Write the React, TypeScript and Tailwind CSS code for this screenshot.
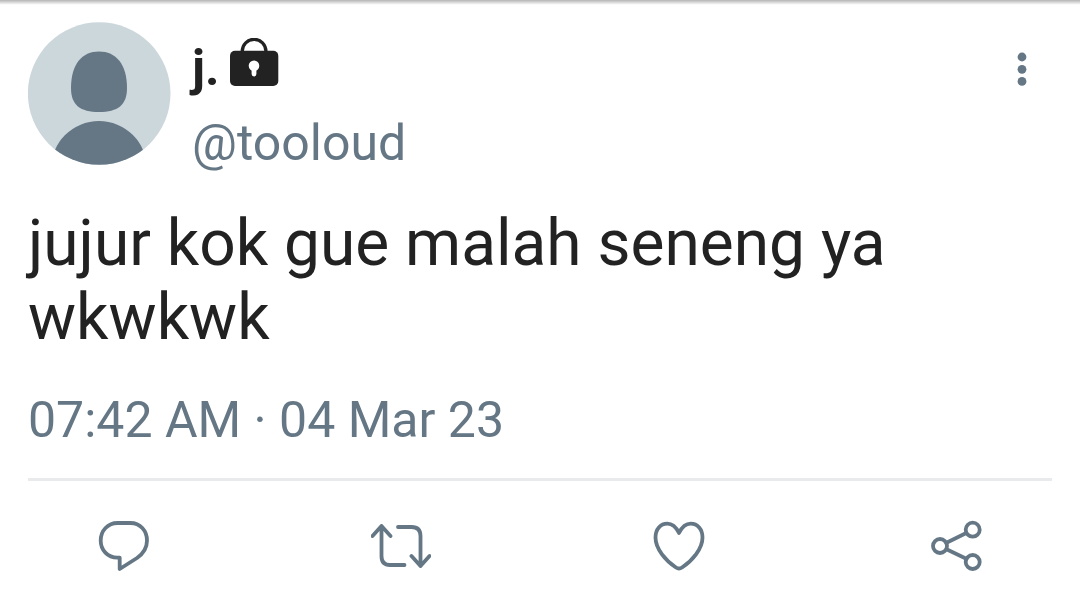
import type { ReactNode } from 'react';

function Avatar() {
    return (
        <svg viewBox="0 0 143 143" className="w-[143px] h-[143px] shrink-0" role="img" aria-label="Default profile picture">
            <defs>
                <clipPath id="avatar-circle">
                    <circle cx="71.2" cy="71.5" r="71.3" />
                </clipPath>
            </defs>
            <g clipPath="url(#avatar-circle)">
                <rect width="143" height="143" fill="#ccd7dc" />
                <path
                    d="M71 29.4C54 29.4 43 42 43 66C43 83 52 90 71 90C90 90 99 83 99 66C99 42 88 29.4 71 29.4Z"
                    fill="#657785"
                />
                <circle cx="71" cy="147" r="48" fill="#657785" />
            </g>
        </svg>
    );
}

function LockIcon() {
    return (
        <svg viewBox="0 0 50 50" className="w-[50px] h-[50px]" role="img" aria-label="Protected account">
            <path d="M12.2 17V13.5A11.8 12.1 0 0 1 36 13.5V17" fill="none" stroke="#222" strokeWidth="3.2" />
            <rect x="0" y="12.8" width="48.3" height="35.2" rx="5" fill="#222" />
            <circle cx="24" cy="27.8" r="5.3" fill="#fff" />
            <path d="M24 29V36" stroke="#fff" strokeWidth="4.8" strokeLinecap="round" />
        </svg>
    );
}

function ActionButton({ label, children }: { label: string; children: ReactNode }) {
    return (
        <button type="button" aria-label={label} className="cursor-pointer text-[#657785]">
            <svg
                viewBox="0 0 60 60"
                className="block w-[60px] h-[60px]"
                fill="none"
                stroke="currentColor"
                strokeWidth="3.8"
                strokeLinecap="round"
                strokeLinejoin="round"
            >
                {children}
            </svg>
        </button>
    );
}

export default function App() {
    return (
        <main className="bg-white font-[Roboto,sans-serif]">
            {/* Shadow of the bar above */}
            <div className="h-2 bg-linear-to-b from-[#b4b4b4] to-white to-60%" />

            <article className="px-7 pt-[14px]">
                {/* Author */}
                <header className="flex items-start">
                    <Avatar />
                    <div className="flex flex-col gap-[15px] pt-4 ml-[21px] grow text-[50px] leading-[60px]">
                        <div className="flex items-start gap-2.5">
                            <span className="font-bold text-[#222]">j.</span>
                            <LockIcon />
                        </div>
                        <a href="#tooloud" className="self-start text-[#657785]">@tooloud</a>
                    </div>
                    <button type="button" aria-label="More options" className="mt-7 mr-6 cursor-pointer text-[#657785]">
                        <svg viewBox="0 0 12 40" className="block w-3 h-10" fill="currentColor">
                            <circle cx="6" cy="7" r="4.4" />
                            <circle cx="6" cy="19.3" r="4.4" />
                            <circle cx="6" cy="31.4" r="4.4" />
                        </svg>
                    </button>
                </header>

                <p className="mt-[34px] text-[64px] leading-[74px] text-[#222]">jujur kok gue malah seneng ya wkwkwk</p>

                <time dateTime="2023-03-04T07:42" className="block mt-[35px] text-[50px] leading-[60px] text-[#657785]">
                    07:42 AM · 04 Mar 23
                </time>

                <hr className="mt-7 h-[3px] border-0 bg-[#e9eaeb]" />
            </article>

            {/* Actions */}
            <footer className="flex justify-between px-[94px] pt-[35px] pb-9">
                <ActionButton label="Reply">
                    <path d="M25.7 53V41.7H23.5C13.5 41.7 6.7 34 6.7 24.5C6.7 14.5 14 7 23.5 7H36.5C46 7 53 14.5 53 24.5C53 32 49.5 37.5 43 42Z" />
                </ActionButton>
                <ActionButton label="Retweet">
                    <path d="M1.5 20L10.5 10L19.5 20M10.5 10V40Q10.5 49 19 49H33.5" />
                    <path d="M27 11H40.5Q49.5 11 49.5 20V50M40.5 40L49.5 50L58.5 40" />
                </ActionButton>
                <ActionButton label="Like">
                    <path d="M30 17C27 11 23 7.7 18.3 7.7C11.5 7.7 6.5 13 6.5 21.5C6.5 33 17 45 27 51.5Q30 53.5 33 51.5C43 45 53.5 33 53.5 21.5C53.5 13 48.5 7.7 41.7 7.7C37 7.7 33 11 30 17Z" />
                </ActionButton>
                <ActionButton label="Share">
                    <circle cx="14" cy="30" r="7" />
                    <circle cx="46.7" cy="13.7" r="7" />
                    <circle cx="46.7" cy="46" r="7" />
                    <path d="M20.5 26.8L40.3 17M20.5 33.2L40.3 42.8" />
                </ActionButton>
            </footer>
        </main>
    );
}
